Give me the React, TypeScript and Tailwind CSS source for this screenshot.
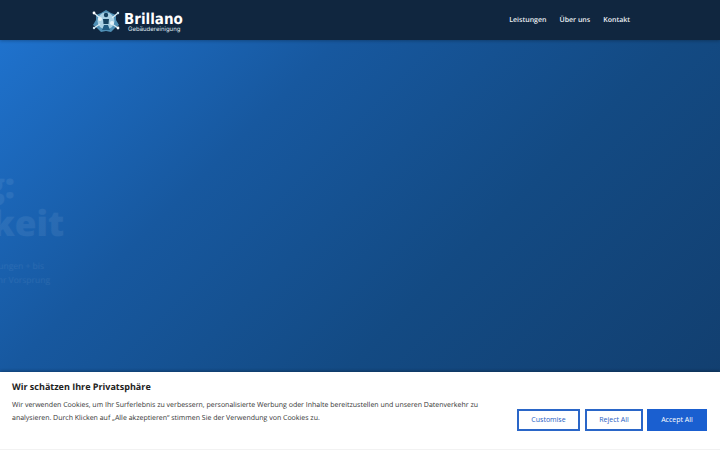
export default function App() {
  return (
    <div className="relative flex h-[450px] w-[720px] flex-col overflow-hidden font-['Open_Sans',sans-serif] [text-rendering:geometricPrecision]">
      <header className="z-10 flex h-10 shrink-0 items-center justify-between bg-[#10263f] pl-[91px] pr-[90px] shadow-[0_1px_3px_rgba(0,0,0,0.25)]">
        <div className="flex items-center gap-[3px]">
          <svg width="30" height="26" viewBox="0 0 30 26" className="mt-[1px]">
            <path d="M5 7 L10 5 L15 2 L20 5 L25 7 L25 12 L28 17 L24 20 L20 24 L15 23 L10 24 L6 20 L2 17 L5 12 Z" fill="#4f8fb5" />
            <circle cx="15" cy="13" r="8.5" fill="#a9d0e4" />
            <circle cx="9" cy="11" r="2" fill="#e4f2f8" />
            <circle cx="21" cy="15" r="2" fill="#e4f2f8" />
            <circle cx="15" cy="7" r="2.2" fill="#14405f" />
            <path d="M12 11 H18 L17.5 16 H12.5 Z" fill="#14405f" />
            <path d="M11 22 L13 17 H17 L19 22 Z" fill="#1f5a82" />
            <path d="M3 5 L9 10 M27 5 L21 10 M3 20 L9 16 M27 20 L21 16" stroke="#dcecf4" strokeWidth="1.2" />
            <circle cx="3" cy="5" r="1.4" fill="#fff" />
            <circle cx="27" cy="5" r="1.2" fill="#cfe6f2" />
            <circle cx="3" cy="20" r="1.2" fill="#cfe6f2" />
            <circle cx="27" cy="20" r="1.4" fill="#fff" />
          </svg>
          <div className="flex flex-col items-start">
            <span className="mt-[4px] font-['DejaVu_Sans_Condensed','DejaVu_Sans',sans-serif] text-[15px] leading-[14px] font-bold text-white">Brillano</span>
            <span className="ml-[4px] font-['Inter',sans-serif] text-[6px] leading-[7px] text-[#dfe7ee]">Gebäudereinigung</span>
          </div>
        </div>
        <nav className="mt-[2px] flex items-center gap-[13px] text-[7px] font-semibold text-[#eef2f6]">
          <a>Leistungen</a>
          <a>Über uns</a>
          <a>Kontakt</a>
        </nav>
      </header>

      <main className="relative flex-1 overflow-hidden bg-[linear-gradient(135deg,#1f72cd_0%,#17589f_30%,#134a83_60%,#123d6c_100%)]">
        <div className="absolute top-[127px] left-[-100px] w-[164px] text-right text-[35px] leading-[38px] font-extrabold text-white/[0.07]">
          <p className="pr-[49px]">ng:</p>
          <p>rkeit</p>
        </div>
        <div className="absolute top-[220px] left-[-100px] w-[150px] text-right text-[8.5px] leading-[14px] text-white/[0.07]">
          <p className="pr-[6px]">ungen + bis</p>
          <p>ihr Vorsprung</p>
        </div>
      </main>

      <section className="absolute right-0 bottom-0 left-0 z-20 flex h-[78px] items-start justify-between border-b border-[#f2f2f2] bg-white pt-[9px] pr-[13px] pl-[12px] shadow-[0_-1px_3px_rgba(0,0,0,0.3)]">
        <div className="w-[480px]">
          <h2 className="text-[9px] leading-[12px] font-bold text-[#222]">Wir schätzen Ihre Privatsphäre</h2>
          <p className="mt-[7px] text-[7px] leading-[12.5px] text-[#333]">
            Wir verwenden Cookies, um Ihr Surferlebnis zu verbessern, personalisierte Werbung oder Inhalte bereitzustellen und unseren Datenverkehr zu analysieren. Durch Klicken auf „Alle akzeptieren“ stimmen Sie der Verwendung von Cookies zu.
          </p>
        </div>
        <div className="mt-[28px] flex text-[7px]">
          <button className="flex h-[22px] w-[63px] items-center justify-center border-2 border-[#2a66c8] bg-white pt-px text-[#1f60c4]">Customise</button>
          <button className="ml-[5px] flex h-[22px] w-[58px] items-center justify-center border-2 border-[#2a66c8] bg-white pt-px text-[#1f60c4]">Reject All</button>
          <button className="ml-[4px] flex h-[22px] w-[60px] items-center justify-center bg-[#1a5fd0] pt-px text-white">Accept All</button>
        </div>
      </section>
    </div>
  );
}
